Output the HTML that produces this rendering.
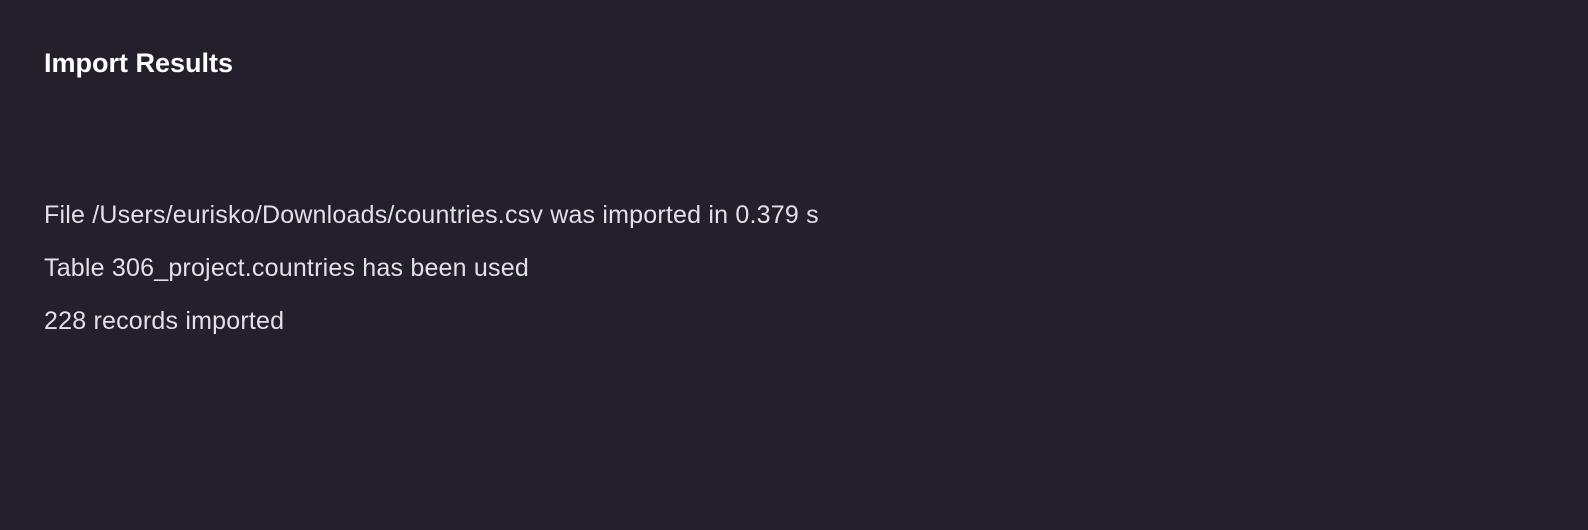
<!DOCTYPE html>
<html><head><style>
html,body{margin:0;padding:0;width:1588px;height:530px;background:#231f2b;overflow:hidden;font-family:"Liberation Sans",sans-serif}
.t{position:absolute;left:44px;white-space:nowrap}
h1{position:absolute;left:44px;top:48px;margin:0;font-size:27px;font-weight:bold;color:#fff;line-height:30px}
.l{font-size:25px;letter-spacing:0.2px;color:#e2e0e6;line-height:30px}
</style></head><body>
<h1>Import Results</h1>
<div class="t l" style="top:200px">File /Users/eurisko/Downloads/countries.csv was imported in 0.379 s</div>
<div class="t l" style="top:253px">Table 306_project.countries has been used</div>
<div class="t l" style="top:306px">228 records imported</div>
</body></html>
